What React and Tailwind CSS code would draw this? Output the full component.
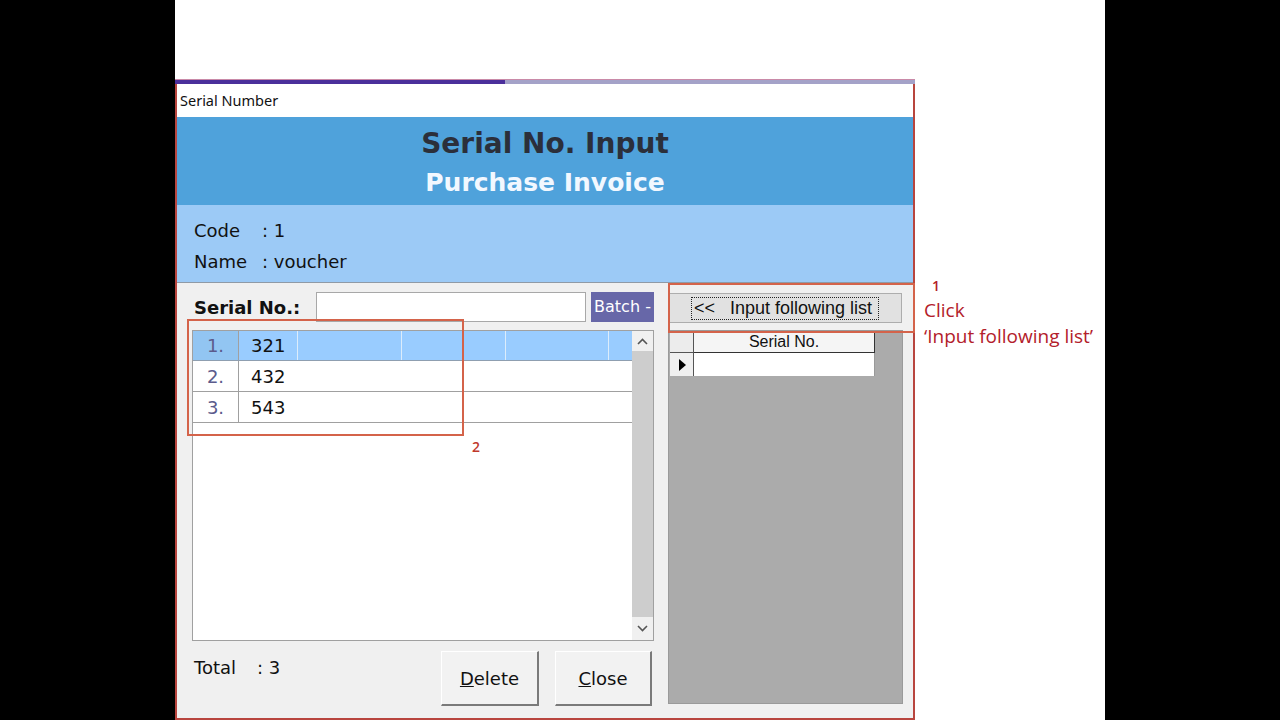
export default function App() {
  const dv = { fontFamily: '"DejaVu Sans", Verdana, sans-serif' };
  const ls = { fontFamily: '"Liberation Sans", Arial, sans-serif' };
  return (
    <div className="flex w-[1280px] h-[720px] overflow-hidden bg-white">
      <div className="w-[175px] h-full bg-black shrink-0" />
      <div className="relative flex w-[930px] h-full bg-white shrink-0">
        {/* Window */}
        <div className="mt-[79px] flex flex-col w-[740px] shrink-0">
          <div className="h-px bg-[#c98aa8]" />
          <div className="flex h-[4px]">
            <div className="w-[330px] bg-[#4b2f9b]" />
            <div className="flex-1 bg-[#a4a2c8]" />
          </div>
          <div className="flex flex-col border-x-2 border-b-2 border-[#b8453e]">
            {/* title bar */}
            <div
              className="h-[33px] bg-white flex items-center pl-[3px] text-[14.5px] text-[#111]"
              style={{ fontFamily: '"Noto Sans", "Open Sans", sans-serif' }}
            >
              Serial Number
            </div>
            {/* header */}
            <div className="h-[88px] bg-[#4fa2db] flex flex-col items-center pt-[10px]" style={dv}>
              <div className="h-[34px] leading-[34px] text-[28px] font-bold text-[#2b2f3a]">Serial No. Input</div>
              <div className="mt-[5px] h-[34px] leading-[34px] text-[25px] font-bold text-[#f2f8ff]">Purchase Invoice</div>
            </div>
            {/* info band */}
            <div className="h-[77px] bg-[#9ccaf6] pl-[17px] pt-[13px] flex flex-col gap-[7px] text-[18px] text-[#111]" style={dv}>
              <div className="flex h-[24px] items-center">
                <span className="w-[68px]">Code</span>
                <span>: 1</span>
              </div>
              <div className="flex h-[24px] items-center">
                <span className="w-[68px]">Name</span>
                <span>: voucher</span>
              </div>
            </div>
            <div className="h-px bg-[#8f9aa6]" />
            {/* body */}
            <div className="flex h-[435px] bg-[#f0f0f0] pl-[15px]">
              {/* left column */}
              <div className="flex flex-col w-[462px] pt-[9px]">
                <div className="flex items-center h-[30px]">
                  <div className="w-[124px] pl-[2px] font-bold text-[18px] text-[#111]" style={dv}>Serial No.:</div>
                  <div className="w-[270px] h-[30px] bg-white border border-[#a8a8a8]" />
                  <div
                    className="ml-[5px] w-[63px] h-[30px] bg-[#6767a8] text-white text-[16px] flex items-center justify-center"
                    style={dv}
                  >
                    Batch -
                  </div>
                </div>
                <div className="mt-[8px] h-[311px] border border-[#a0a0a0] bg-white flex" style={dv}>
                  <div className="flex-1 flex flex-col">
                    <div className="flex h-[30px] border-b border-[#8f9fb0]">
                      <div className="w-[46px] border-r border-[#a0a0a0] bg-[#92c5f2] flex items-center justify-center text-[18px] text-[#5b5b8c]">1.</div>
                      <div className="w-[59px] border-r border-[#dcecfb] bg-[#99ccff] flex items-center pl-[12px] text-[18px] text-[#111]">321</div>
                      <div className="w-[104px] border-r border-[#dcecfb] bg-[#99ccff]" />
                      <div className="w-[104px] border-r border-[#dcecfb] bg-[#99ccff]" />
                      <div className="w-[103px] border-r border-[#dcecfb] bg-[#99ccff]" />
                      <div className="flex-1 bg-[#99ccff]" />
                    </div>
                    {[
                      ['2.', '432'],
                      ['3.', '543'],
                    ].map(([n, v]) => (
                      <div key={n} className="flex h-[31px] border-b border-[#a0a0a0]">
                        <div className="w-[46px] border-r border-[#a0a0a0] flex items-center justify-center text-[18px] text-[#5b5b8c]">{n}</div>
                        <div className="flex-1 flex items-center pl-[12px] text-[18px] text-[#111]">{v}</div>
                      </div>
                    ))}
                  </div>
                  {/* scrollbar */}
                  <div className="w-[21px] flex flex-col bg-[#f0f0f0]">
                    <div className="h-[20px] flex items-center justify-center">
                      <svg width="11" height="7" viewBox="0 0 11 7">
                        <polyline points="1,6 5.5,1.5 10,6" fill="none" stroke="#555" strokeWidth="1.6" />
                      </svg>
                    </div>
                    <div className="h-[266px] bg-[#cdcdcd]" />
                    <div className="flex-1 flex items-center justify-center">
                      <svg width="11" height="7" viewBox="0 0 11 7">
                        <polyline points="1,1 5.5,5.5 10,1" fill="none" stroke="#555" strokeWidth="1.6" />
                      </svg>
                    </div>
                  </div>
                </div>
                <div className="mt-[10px] flex h-[55px]" style={dv}>
                  <div className="w-[249px] pl-[2px] pt-[3px] text-[18px] text-[#111]">
                    <span className="inline-block w-[63px]">Total</span>: 3
                  </div>
                  <div className="w-[98px] h-[55px] bg-[#f2f2f2] border-t border-l border-[#ffffff] border-r-2 border-b-2 border-r-[#7a7a7a] border-b-[#7a7a7a] flex items-center justify-center text-[18px] text-[#111]">
                    <span><span className="underline">D</span>elete</span>
                  </div>
                  <div className="ml-[16px] w-[97px] h-[55px] bg-[#f2f2f2] border-t border-l border-[#ffffff] border-r-2 border-b-2 border-r-[#7a7a7a] border-b-[#7a7a7a] flex items-center justify-center text-[18px] text-[#111]">
                    <span><span className="underline">C</span>lose</span>
                  </div>
                </div>
              </div>
              {/* right column */}
              <div className="ml-[14px] w-[235px] flex flex-col pt-[10px]">
                <div className="w-[234px] h-[30px] bg-[#e1e1e1] border border-[#adadad] flex items-center justify-center">
                  <div
                    className="w-[188px] h-[23px] border border-dotted border-[#222] flex items-center pl-[2px] whitespace-pre text-[18px] text-[#111]"
                    style={ls}
                  >
                    {'<<   Input following list'}
                  </div>
                </div>
                <div className="mt-[7px] h-[374px] bg-[#ababab] border border-[#9a9a9a] pl-px">
                  <div className="flex h-[22px]">
                    <div className="w-[24px] bg-[#ececec] border-r border-b border-[#555]" />
                    <div className="w-[181px] bg-[#f5f5f5] border-r border-b border-[#333] flex items-center justify-center text-[16px] text-[#111]" style={ls}>
                      Serial No.
                    </div>
                  </div>
                  <div className="flex h-[23px]">
                    <div className="w-[24px] bg-[#f0f0f0] border-r border-[#555] flex items-center justify-center">
                      <svg width="8" height="12" viewBox="0 0 8 12">
                        <polygon points="1,0 8,6 1,12" fill="#000" />
                      </svg>
                    </div>
                    <div className="w-[181px] bg-white border-r border-[#999]" />
                  </div>
                </div>
              </div>
            </div>
          </div>
        </div>
        {/* annotation text */}
        <div
          className="flex flex-col pl-[9px] pt-[275px] text-[#b3202a]"
          style={{ fontFamily: '"Open Sans", "Noto Sans", sans-serif' }}
        >
          <div className="pl-[8px] h-[22px] leading-[22px] text-[14px] font-semibold">1</div>
          <div className="h-[26px] leading-[26px] text-[19px] whitespace-nowrap">Click</div>
          <div className="h-[26px] leading-[26px] text-[19px] whitespace-nowrap">‘Input following list’</div>
        </div>
        {/* overlays */}
        <div className="absolute left-[493px] top-[283px] w-[247px] h-[50px] border-2 border-[#d4634a]" />
        <div className="absolute left-[12px] top-[319px] w-[277px] h-[117px] border-2 border-[#d4634a]" />
        <div
          className="absolute left-[297px] top-[436px] text-[14px] font-semibold text-[#c0392b]"
          style={{ fontFamily: '"Open Sans", "Noto Sans", sans-serif' }}
        >
          2
        </div>
      </div>
      <div className="w-[175px] h-full bg-black shrink-0" />
    </div>
  );
}
